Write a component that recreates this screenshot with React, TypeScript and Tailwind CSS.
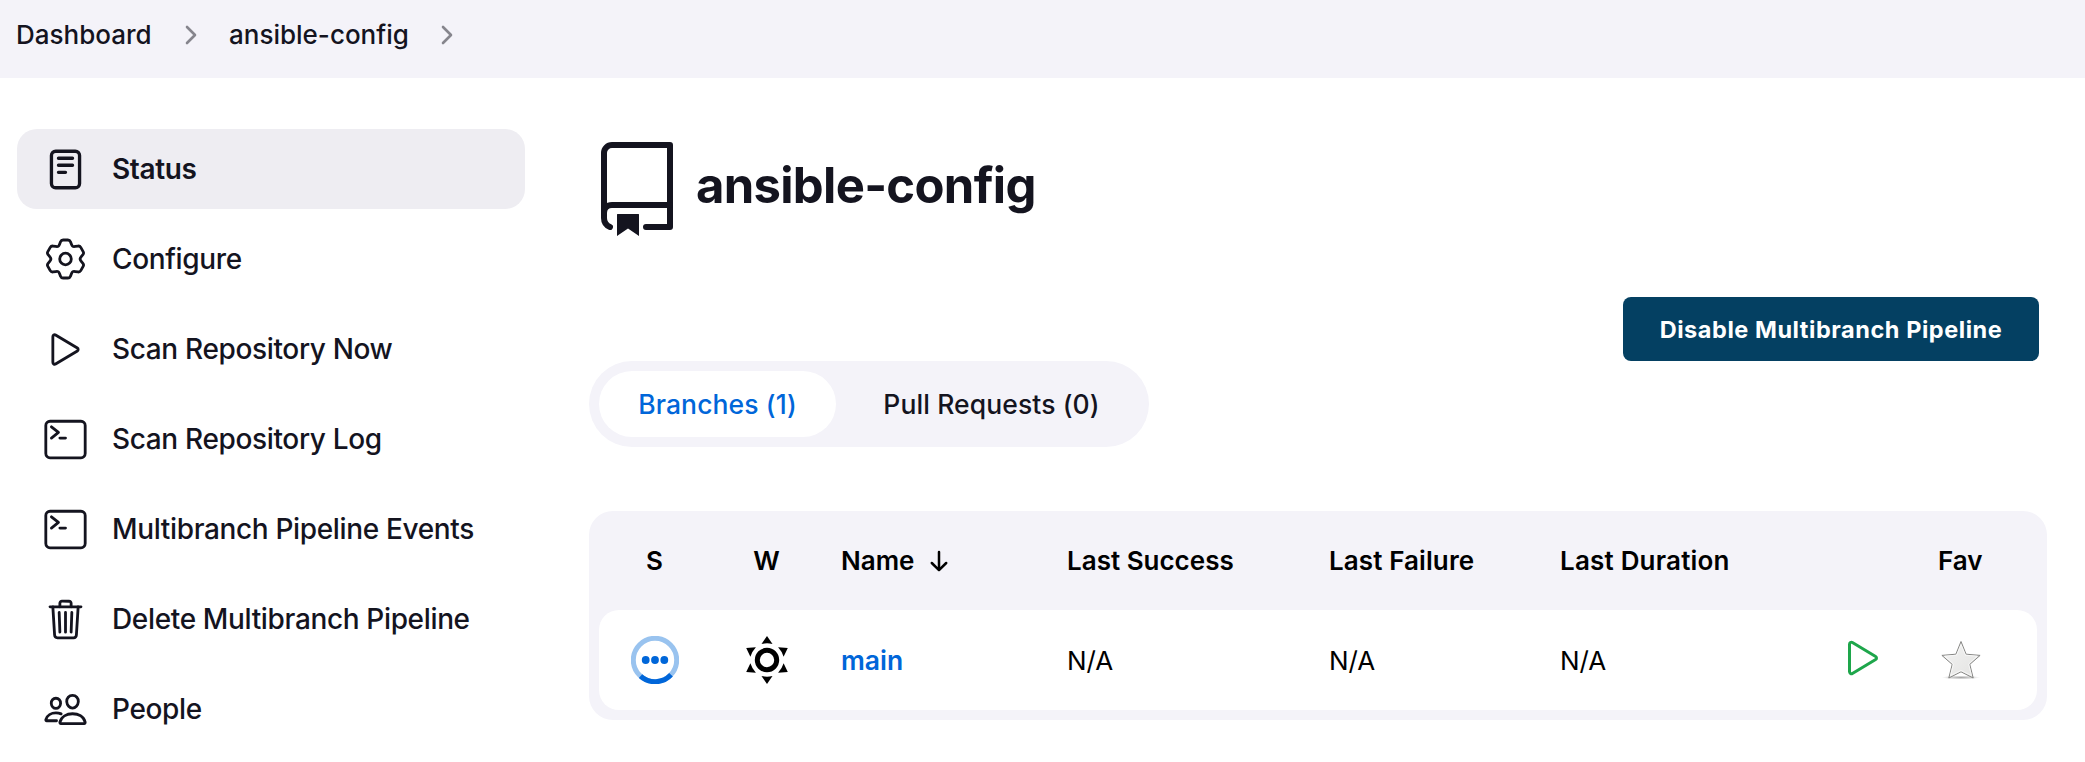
import type { ReactNode } from "react";
import {
  IoPeopleOutline,
  IoPlayOutline,
  IoTerminalOutline,
  IoTrashOutline,
} from "react-icons/io5";

const iconClass = "size-[45px] shrink-0";

type Point = [number, number];

// Closed polygon with every corner softened by a quadratic curve.
function roundedPath(points: Point[], radius: number) {
  const toward = (from: Point, to: Point): Point => {
    const length = Math.hypot(to[0] - from[0], to[1] - from[1]);
    const t = Math.min(radius / length, 0.5);
    return [from[0] + (to[0] - from[0]) * t, from[1] + (to[1] - from[1]) * t];
  };
  return (
    points
      .map((point, i) => {
        const before = toward(point, points[(i + points.length - 1) % points.length]);
        const after = toward(point, points[(i + 1) % points.length]);
        return `${i === 0 ? "M" : "L"}${before.join(" ")}Q${point.join(" ")} ${after.join(" ")}`;
      })
      .join("") + "Z"
  );
}

const gearPoints: Point[] = [0, 60, 120, 180, 240, 300].flatMap((degrees) => {
  const a = (degrees * Math.PI) / 180;
  const tooth: Point[] = [[-6.6, -13], [-4.3, -19], [4.3, -19], [6.6, -13]];
  return tooth.map(([x, y]): Point => [
    x * Math.cos(a) - y * Math.sin(a),
    x * Math.sin(a) + y * Math.cos(a),
  ]);
});
const gearPath = roundedPath(gearPoints, 1.9);

function GearIcon() {
  return (
    <svg className={iconClass} viewBox="-22.5 -22 45 45" fill="none" stroke="currentColor" strokeWidth="2.8" strokeLinejoin="round">
      <path d={gearPath} />
      <circle r="5.800" />
    </svg>
  );
}

function ReaderIcon() {
  return (
    <svg className={iconClass} viewBox="0 0 512 512" fill="none" stroke="currentColor" strokeWidth="38" strokeLinecap="round" strokeLinejoin="round">
      <rect x="96" y="48" width="320" height="416" rx="48" ry="48" />
      <path d="M176 128h160M176 208h160M176 288h80" />
    </svg>
  );
}

const tasks: { label: string; icon: ReactNode; active?: boolean }[] = [
  { label: "Status", icon: <ReaderIcon />, active: true },
  { label: "Configure", icon: <GearIcon /> },
  { label: "Scan Repository Now", icon: <IoPlayOutline className={iconClass} /> },
  { label: "Scan Repository Log", icon: <IoTerminalOutline className={iconClass} /> },
  { label: "Multibranch Pipeline Events", icon: <IoTerminalOutline className={iconClass} /> },
  { label: "Delete Multibranch Pipeline", icon: <IoTrashOutline className={iconClass} /> },
  { label: "People", icon: <IoPeopleOutline className={iconClass} /> },
];

function Chevron() {
  return (
    <svg className="h-5 w-3 shrink-0" viewBox="0 0 12 20" fill="none" stroke="#86858d" strokeWidth="2.6" strokeLinecap="round" strokeLinejoin="round">
      <path d="M2 2l8 8-8 8" />
    </svg>
  );
}

function RepoIcon() {
  return (
    <svg className="h-[96px] w-[74px] shrink-0" viewBox="600 141 74 96" fill="none" stroke="#14141f" strokeWidth="6" strokeLinecap="round" strokeLinejoin="round">
      <path d="M646 227h24V145h-58a8 8 0 0 0-8 8v65c0 4.500 2.500 7.500 6 9" />
      <path d="M604 213c0-5 3-8 8-8h58" />
      <path d="M617 214.500q0-.5.5-.5h21q.5 0 .5.5V236l-11-7.500-11 7.500z" fill="#14141f" stroke="none" />
    </svg>
  );
}

function RunningIcon() {
  return (
    <svg className="size-12" viewBox="0 0 48 48" fill="none">
      <circle cx="24" cy="24" r="21.700" stroke="#99c3ef" strokeWidth="5" />
      <path d="M9.500 40.100a21.700 21.700 0 0 0 30.500-1.300" stroke="#0066d9" strokeWidth="5" />
      <g fill="#0066d9">
        <circle cx="14.700" cy="24" r="3.900" />
        <circle cx="24" cy="24" r="3.900" />
        <circle cx="33.300" cy="24" r="3.900" />
      </g>
    </svg>
  );
}

function SunIcon() {
  return (
    <svg className="size-12" viewBox="-24 -24 48 48">
      <circle r="9.700" fill="none" stroke="#000" strokeWidth="5" />
      {[0, 60, 120, 180, 240, 300].map((angle) => (
        <path key={angle} d="M0-24l5.500 8q-5.500-1.300-11 0z" transform={`rotate(${angle})`} />
      ))}
    </svg>
  );
}

function StarIcon() {
  return (
    <svg className="h-10 w-10" viewBox="0 0 40 40">
      <defs>
        <linearGradient id="star" x1="0" y1="0" x2="1" y2="1">
          <stop offset="0" stopColor="#f4f4f3" />
          <stop offset="0.5" stopColor="#ebebea" />
          <stop offset="1" stopColor="#e2e2e0" />
        </linearGradient>
        <radialGradient id="shade">
          <stop offset="0" stopColor="#000" stopOpacity="0.35" />
          <stop offset="1" stopColor="#000" stopOpacity="0" />
        </radialGradient>
      </defs>
      <ellipse cx="20" cy="37.500" rx="19" ry="2" fill="url(#shade)" />
      <path d="M20 1.500l5.100 12.700 14 1.200-10.300 9 3.400 13.600L20 31.800 7.800 38l3.400-13.600L.9 15.400l14-1.200z" fill="url(#star)" stroke="#858583" strokeWidth="1" />
      <path d="M20 4.700l4.400 10.500 11.700 1-8.500 7.800 2.900 11.600L20 30.500 9.500 35.600 12.400 24 3.900 16.200l11.700-1z" fill="none" stroke="#fafafa" strokeWidth="0.800" />
    </svg>
  );
}

const columns = "grid grid-cols-[111px_113px_223px_263px_231px_240px_112px_1fr] items-center";

export default function App() {
  return (
    <div className="h-[762px] w-full overflow-hidden bg-white font-['Inter',sans-serif] text-[#14141f]">
      <nav className="flex h-[78px] items-start bg-[#f4f3f9] pl-4 pt-[19px] text-[26px] leading-8 font-medium">
        <span className="w-[169px]">Dashboard</span>
        <span className="flex h-8 w-[44px] items-center"><Chevron /></span>
        <span className="w-[212px]">ansible-config</span>
        <span className="flex h-8 items-center"><Chevron /></span>
      </nav>

      <div className="flex">
        <aside className="w-[525px] shrink-0 pl-[17px] pt-[51px]">
          <ul className="flex flex-col gap-[10px]">
            {tasks.map((task) => (
              <li
                key={task.label}
                className={
                  task.active
                    ? "flex h-20 items-center gap-6 rounded-[20px] bg-[#eeedf2] pl-[26px] font-semibold"
                    : "flex h-20 items-center gap-6 rounded-[20px] pl-[26px] font-medium"
                }
              >
                {task.icon}
                <span className="text-[28px] whitespace-nowrap tracking-[-0.35px]">{task.label}</span>
              </li>
            ))}
          </ul>
        </aside>

        <main className="flex w-[1522px] flex-col pl-16">
          <div className="mt-[63px] flex h-[96px] items-center pl-[11px]">
            <RepoIcon />
            <h1 className="ml-[22px] pb-[6px] text-[49px] leading-[60px] font-bold tracking-[-0.7px]">ansible-config</h1>
          </div>

          <div className="mt-[60px] mr-2 flex justify-end">
            <button className="h-16 w-[416px] rounded-lg bg-[#044062] pt-[2px] text-[23.500px] font-bold tracking-[0.55px] whitespace-nowrap text-white">
              Disable Multibranch Pipeline
            </button>
          </div>

          <div className="flex h-[86px] w-[560px] rounded-[43px] bg-[#f4f3f9] p-[10px] text-[26.5px] font-medium">
            <span className="flex w-[237px] items-center justify-center rounded-[33px] bg-white pt-[2px] tracking-[0.1px] text-[#0066d9]">Branches (1)</span>
            <span className="flex flex-1 items-center justify-center pt-[2px] pl-2 tracking-[0.1px]">Pull Requests (0)</span>
          </div>

          <div className="mt-16 h-[209px] w-[1458px] rounded-[24px] bg-[#f4f3f9] px-[10px] text-[26px] text-black">
            <div className={`${columns} h-[99px] font-semibold`}>
              <span className="text-center">S</span>
              <span className="text-center">W</span>
              <span className="flex items-center gap-4 pl-[18px]">
                Name
                <svg className="h-6 w-[18px]" viewBox="0 0 18 24" fill="none" stroke="#000" strokeWidth="2.500" strokeLinecap="round" strokeLinejoin="round">
                  <path d="M9 3v18M1.800 14L9 21.200 16.200 14" />
                </svg>
              </span>
              <span className="pl-[21px]">Last Success</span>
              <span className="pl-5 tracking-[0.1px]">Last Failure</span>
              <span className="pl-5 tracking-[0.2px]">Last Duration</span>
              <span />
              <span className="pl-[46px]">Fav</span>
            </div>
            <div className={`${columns} h-[100px] rounded-[20px] bg-white`}>
              <span className="flex justify-center"><RunningIcon /></span>
              <span className="flex justify-center"><SunIcon /></span>
              <span className="pt-px pl-[18px] text-[26.5px] font-semibold text-[#0066d9]">main</span>
              <span className="pl-[21px]">N/A</span>
              <span className="pl-5">N/A</span>
              <span className="pl-5">N/A</span>
              <span className="flex pb-1 pl-[59px]"><IoPlayOutline className="size-12 text-[#1ea64b]" /></span>
              <span className="pl-[49px]"><StarIcon /></span>
            </div>
          </div>
        </main>
      </div>
    </div>
  );
}
